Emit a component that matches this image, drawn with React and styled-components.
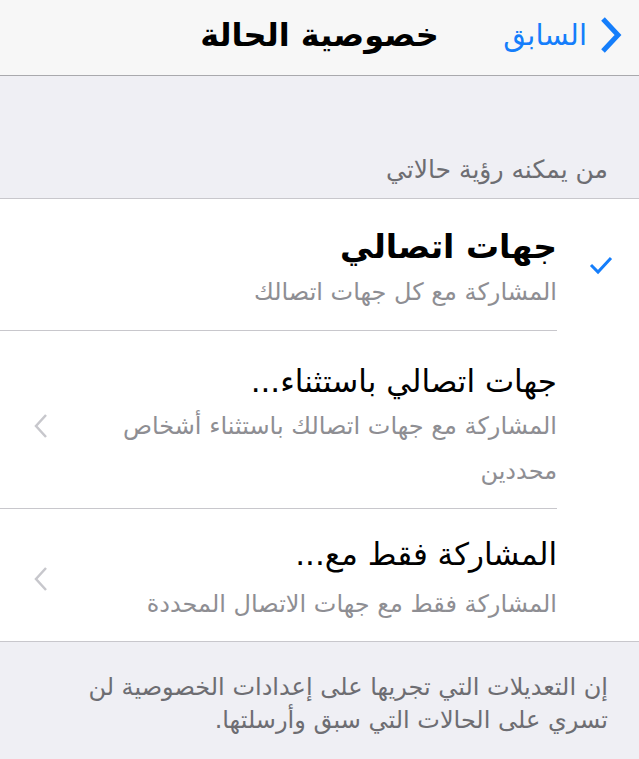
import React from 'react';
import styled, { createGlobalStyle } from 'styled-components';

const Global = createGlobalStyle`
  body {
    margin: 0;
    background: #efeff4;
    font-family: "DejaVu Sans", "Noto Sans", sans-serif;
  }
`;

const Page = styled.div`
  direction: rtl;
  width: 639px;
  min-height: 759px;
  background: #efeff4;
`;

const NavBar = styled.div`
  display: grid;
  grid-template-columns: 1fr auto 1fr;
  align-items: center;
  height: 76px;
  padding-bottom: 6px;
  box-sizing: border-box;
  background: #f7f7f7;
  border-bottom: 1px solid #a9a9ad;
`;

const Back = styled.div`
  display: flex;
  align-items: center;
  gap: 10px;
  padding-right: 16px;
  color: #157efb;
  font-size: 29px;
`;

const Title = styled.div`
  font-size: 32px;
  font-weight: bold;
  color: #000;
`;

const SectionHeader = styled.div`
  height: 123px;
  display: flex;
  align-items: flex-end;
  padding: 0 31px 13px 0;
  box-sizing: border-box;
  font-size: 25px;
  line-height: 30px;
  color: #6d6d72;
  border-bottom: 1px solid #c8c7cc;
`;

const Group = styled.div`
  background: #fff;
  border-bottom: 1px solid #c8c7cc;
`;

const Row = styled.div`
  display: grid;
  grid-template-columns: 82px 1fr 82px;
  align-items: center;
`;

const Lead = styled.div`
  display: flex;
  justify-content: center;
  padding-left: 6px;
`;

const Body = styled.div`
  padding: ${p => p.pad};
  border-bottom: ${p => p.last ? 'none' : '1px solid #c8c7cc'};
  grid-column: 2 / 4;
  display: grid;
  grid-template-columns: 1fr 82px;
  align-items: center;
`;

const Texts = styled.div`
  display: flex;
  flex-direction: column;
`;

const RowTitle = styled.div`
  font-size: ${p => p.bold ? '33px' : '31px'};
  font-weight: ${p => p.bold ? 'bold' : 'normal'};
  color: #000;
  line-height: 46px;
`;

const RowSub = styled.div`
  font-size: 24px;
  color: #8e8e93;
  line-height: 45px;
  margin-top: ${p => p.gap || 0}px;
`;

const Accessory = styled.div`
  display: flex;
  justify-content: center;
`;

const Footer = styled.div`
  padding: 29px 31px 20px 24px;
  font-size: 24px;
  line-height: 33px;
  color: #6d6d72;
`;

const Chevron = () => (
  <svg width="16" height="26" viewBox="0 0 16 26">
    <path d="M13 2 L3 13 L13 24" fill="none" stroke="#c7c7cc" strokeWidth="2.5" />
  </svg>
);

const rows = [
  { title: 'جهات اتصالي', sub: 'المشاركة مع كل جهات اتصالك', bold: true, check: true, pad: '25px 0 15px 0' },
  { title: 'جهات اتصالي باستثناء...', sub: 'المشاركة مع جهات اتصالك باستثناء أشخاص محددين', pad: '27px 0 14px 0' },
  { title: 'المشاركة فقط مع...', sub: 'المشاركة فقط مع جهات الاتصال المحددة', pad: '22px 0 14px 0', gap: 5, last: true },
];

export default function App() {
  return (
    <Page>
      <Global />
      <NavBar>
        <Back>
          <svg width="26" height="40" viewBox="0 0 26 40">
            <path d="M6 4 L21 20 L6 36" fill="none" stroke="#157efb" strokeWidth="5" />
          </svg>
          السابق
        </Back>
        <Title>خصوصية الحالة</Title>
        <div />
      </NavBar>
      <SectionHeader>من يمكنه رؤية حالاتي</SectionHeader>
      <Group>
        {rows.map((r, i) => (
          <Row key={i}>
            <Lead>
              {r.check && (
                <svg width="24" height="20" viewBox="0 0 24 20">
                  <path d="M2 10 L9 17 L22 3" fill="none" stroke="#157efb" strokeWidth="3" />
                </svg>
              )}
            </Lead>
            <Body pad={r.pad} last={r.last}>
              <Texts>
                <RowTitle bold={r.bold}>{r.title}</RowTitle>
                <RowSub gap={r.gap}>{r.sub}</RowSub>
              </Texts>
              <Accessory>{!r.check && <Chevron />}</Accessory>
            </Body>
          </Row>
        ))}
      </Group>
      <Footer>
        إن التعديلات التي تجريها على إعدادات الخصوصية لن تسري على الحالات التي سبق وأرسلتها.
      </Footer>
    </Page>
  );
}
